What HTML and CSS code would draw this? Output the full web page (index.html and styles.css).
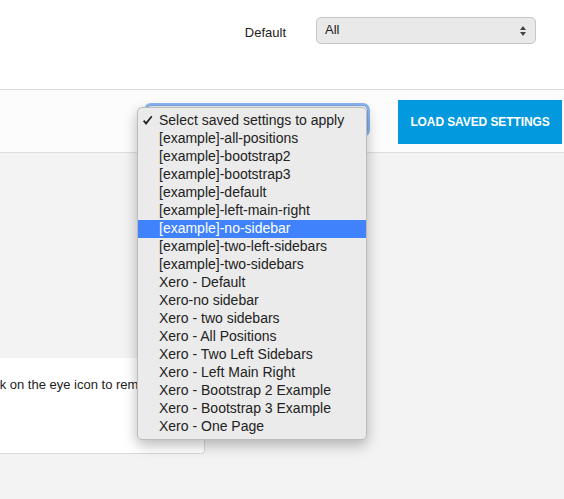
FILE: index.html
```html
<!DOCTYPE html>
<html>
<head>
<meta charset="utf-8">
<link rel="stylesheet" href="styles.css">
</head>
<body>
<div class="page">
  <header class="top">
    <span class="label">Default</span>
    <div class="select">
      <span>All</span>
      <svg class="arrows" width="8" height="12" viewBox="0 0 8 12"><path d="M4 1 L7 5 L1 5 Z M4 11 L7 7 L1 7 Z" fill="#444"/></svg>
    </div>
  </header>
  <section class="band">
    <div class="saved-select"></div>
    <button class="load-btn">LOAD SAVED SETTINGS</button>
  </section>
  <main class="content">
    <div class="card">
      <p class="card-text">Click on the eye icon to rem</p>
    </div>
  </main>
  <ul class="menu">
    <li class="checked"><svg class="check" width="11" height="11" viewBox="0 0 11 11"><path d="M1 6.2 L2.3 5 L4 7 L9.2 0.8 L10.4 1.8 L4.1 10 Z" fill="#222"/></svg>Select saved settings to apply</li>
    <li>[example]-all-positions</li>
    <li>[example]-bootstrap2</li>
    <li>[example]-bootstrap3</li>
    <li>[example]-default</li>
    <li>[example]-left-main-right</li>
    <li class="active">[example]-no-sidebar</li>
    <li>[example]-two-left-sidebars</li>
    <li>[example]-two-sidebars</li>
    <li>Xero - Default</li>
    <li>Xero-no sidebar</li>
    <li>Xero - two sidebars</li>
    <li>Xero - All Positions</li>
    <li>Xero - Two Left Sidebars</li>
    <li>Xero - Left Main Right</li>
    <li>Xero - Bootstrap 2 Example</li>
    <li>Xero - Bootstrap 3 Example</li>
    <li>Xero - One Page</li>
  </ul>
</div>
</body>
</html>
```
FILE: styles.css
```css
* { box-sizing: border-box; }
html, body { margin: 0; padding: 0; }
body {
  font-family: "Liberation Sans", Arial, sans-serif;
  color: #222;
  background: #f3f3f3;
  width: 564px;
  height: 499px;
  overflow: hidden;
}
.page { position: relative; height: 499px; display: flex; flex-direction: column; }
.top {
  height: 90px;
  background: #fff;
  border-bottom: 1px solid #dcdcdc;
  display: flex;
  justify-content: flex-end;
  align-items: flex-start;
  padding: 17px 28px 0 0;
  gap: 30px;
}
.label { font-size: 13px; line-height: 13px; margin-top: 9px; color: #222; }
.select {
  width: 220px;
  height: 27px;
  border: 1px solid #c6c6c6;
  border-radius: 5px;
  background: #e9e9e9;
  display: flex;
  align-items: center;
  justify-content: space-between;
  padding: 0 8px 0 8px;
  font-size: 13px;
}
.select span { margin-top: -2px; }
.arrows { margin-top: 1px; }
.band {
  height: 63px;
  background: #fcfcfc;
  border-bottom: 1px solid #dedede;
  display: flex;
  justify-content: flex-end;
  align-items: flex-start;
  padding: 10px 2px 0 0;
  gap: 30px;
}
.saved-select {
  width: 222px;
  height: 30px;
  margin-top: 5px;
  border: 1px solid #7aa7e6;
  border-radius: 5px;
  box-shadow: 0 0 0 2px #8ab6f2;
  background: #f0f0f0;
}
.load-btn {
  width: 164px;
  height: 44px;
  background: #0399de;
  border: none;
  color: #fff;
  font-family: "Liberation Sans", Arial, sans-serif;
  font-size: 12px;
  font-weight: bold;
  letter-spacing: -0.1px;
  padding: 0;
}
.content { flex: 1; padding-top: 205px; }
.card {
  width: 205px;
  height: 96px;
  background: #fff;
  border: 1px solid #d8d8d8;
  border-left: none;
  border-top: none;
  border-radius: 0 0 4px 0;
  overflow: hidden;
  white-space: nowrap;
}
.card-text { margin: 19px 0 0 -22px; font-size: 13px; color: #222; }
.menu {
  position: absolute;
  left: 137px;
  top: 107px;
  width: 230px;
  margin: 0;
  padding: 4px 0 3px 0;
  list-style: none;
  background: #ebebeb;
  border: 1px solid #bcbcbc;
  border-radius: 5px;
  box-shadow: 0 5px 14px rgba(0,0,0,0.28);
}
.menu li {
  height: 18px;
  line-height: 16px;
  font-size: 14px;
  padding-left: 21px;
  color: #222;
  position: relative;
  white-space: nowrap;
}
.menu li.active { background: #3f82fc; color: #fff; }
.check { position: absolute; left: 4px; top: 3px; }
```
